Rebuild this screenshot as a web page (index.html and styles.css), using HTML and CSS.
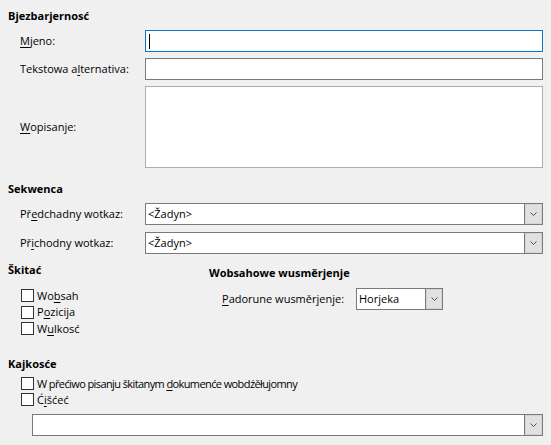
FILE: index.html
```html
<!DOCTYPE html>
<html lang="hsb">
<head>
<meta charset="utf-8">
<title>Bjezbarjernosć</title>
<link rel="stylesheet" href="styles.css">
</head>
<body>
<section class="sec sec-access">
  <div class="title">Bjezbarjernosć</div>
  <div class="form-grid">
    <label class="lbl"><u>M</u>jeno:</label>
    <div class="field focused"><span class="caret"></span></div>
    <label class="lbl">Tekstowa a<u>l</u>ternativa:</label>
    <div class="field"></div>
    <label class="lbl"><u>W</u>opisanje:</label>
    <div class="field area"></div>
  </div>
</section>

<section class="sec sec-seq">
  <div class="title">Sekwenca</div>
  <div class="form-grid seq-grid">
    <label class="lbl">Př<u>e</u>dchadny wotkaz:</label>
    <div class="combo"><span class="combo-text">&lt;Žadyn&gt;</span><span class="combo-btn"><svg width="7" height="4" viewBox="0 0 7 4"><polyline points="0.5,0.5 3.5,3.5 6.5,0.5" fill="none" stroke="#505050" stroke-width="1"/></svg></span></div>
    <label class="lbl">Př<u>i</u>chodny wotkaz:</label>
    <div class="combo"><span class="combo-text">&lt;Žadyn&gt;</span><span class="combo-btn"><svg width="7" height="4" viewBox="0 0 7 4"><polyline points="0.5,0.5 3.5,3.5 6.5,0.5" fill="none" stroke="#505050" stroke-width="1"/></svg></span></div>
  </div>
</section>

<section class="sec sec-two">
  <div class="col-left">
    <div class="title">Škitać</div>
    <div class="checks">
      <div class="check"><span class="box"></span><span>Wo<u>b</u>sah</span></div>
      <div class="check"><span class="box"></span><span>P<u>o</u>zicija</span></div>
      <div class="check"><span class="box"></span><span>W<u>u</u>lkosć</span></div>
    </div>
  </div>
  <div class="col-right">
    <div class="title">Wobsahowe wusměrjenje</div>
    <div class="align-row">
      <label class="lbl"><u>P</u>adorune wusměrjenje:</label>
      <div class="combo small"><span class="combo-text">Horjeka</span><span class="combo-btn"><svg width="7" height="4" viewBox="0 0 7 4"><polyline points="0.5,0.5 3.5,3.5 6.5,0.5" fill="none" stroke="#505050" stroke-width="1"/></svg></span></div>
    </div>
  </div>
</section>

<section class="sec sec-props">
  <div class="title">Kajkosće</div>
  <div class="checks props-checks">
    <div class="check"><span class="box"></span><span class="long">W přećiwo pisanju škitanym <u>d</u>okumenće wobdźěłujomny</span></div>
    <div class="check"><span class="box"></span><span>Ć<u>i</u>šćeć</span></div>
  </div>
  <div class="combo wide"><span class="combo-text"></span><span class="combo-btn"><svg width="7" height="4" viewBox="0 0 7 4"><polyline points="0.5,0.5 3.5,3.5 6.5,0.5" fill="none" stroke="#505050" stroke-width="1"/></svg></span></div>
</section>
</body>
</html>
```

FILE: styles.css
```css
* { box-sizing: border-box; }

html, body {
  background: #f0f0f0;
}

body {
  margin: 0;
  padding: 8px 8px 0 8px;
  font-family: "Open Sans", "Noto Sans", sans-serif;
  font-size: 11px;
  line-height: 16px;
  color: #000;
}

u { text-decoration-thickness: 1px; text-underline-offset: 2px; }

.title {
  font-weight: 700;
  font-size: 11px;
  height: 16px;
}

.form-grid {
  display: grid;
  grid-template-columns: 125px 1fr;
  row-gap: 6px;
  padding-left: 12px;
  margin-top: 6px;
  align-items: center;
}

.seq-grid {
  row-gap: 7px;
}

.lbl {
  white-space: nowrap;
}

.field {
  height: 22px;
  background: #fff;
  border: 1px solid #7a7a7a;
  display: flex;
  align-items: center;
}

.field.focused {
  border-color: #0078d7;
}

.field.area {
  height: 82px;
  border-color: #adadad;
}

.caret {
  display: block;
  width: 1px;
  height: 15px;
  background: #000;
  margin-left: 3px;
}

.sec-seq { margin-top: 13px; }

.combo {
  height: 22px;
  background: #fff;
  border: 1px solid #7a7a7a;
  display: flex;
  align-items: stretch;
}

.combo-text {
  flex: 1;
  padding-left: 2px;
  display: flex;
  align-items: center;
  white-space: nowrap;
}

.combo-btn {
  width: 18px;
  background: #e1e1e1;
  border-left: 1px solid #7a7a7a;
  box-shadow: inset 0 0 0 1px #d4d4d4;
  display: flex;
  align-items: center;
  justify-content: center;
}

.sec-two {
  display: grid;
  grid-template-columns: 201px 1fr;
  margin-top: 8px;
}

.checks {
  display: flex;
  flex-direction: column;
  gap: 3.5px;
  padding-left: 13px;
  margin-top: 11px;
}

.check {
  display: flex;
  align-items: center;
  height: 13px;
  white-space: nowrap;
}

.box {
  width: 13px;
  height: 13px;
  border: 1px solid #333;
  background: #fff;
  margin-right: 3px;
  flex: none;
}

.long {
  letter-spacing: -0.6px;
}

.col-right .title {
  margin-top: 3px;
}

.align-row {
  display: grid;
  grid-template-columns: 134px 87px;
  align-items: center;
  padding-left: 13px;
  margin-top: 7px;
}

.combo.small .combo-btn { width: 17px; }

.sec-props {
  margin-top: 21px;
}

.props-checks {
  margin-top: 5px;
  gap: 3px;
}

.combo.wide {
  margin-left: 24px;
  margin-top: 8px;
}
```
